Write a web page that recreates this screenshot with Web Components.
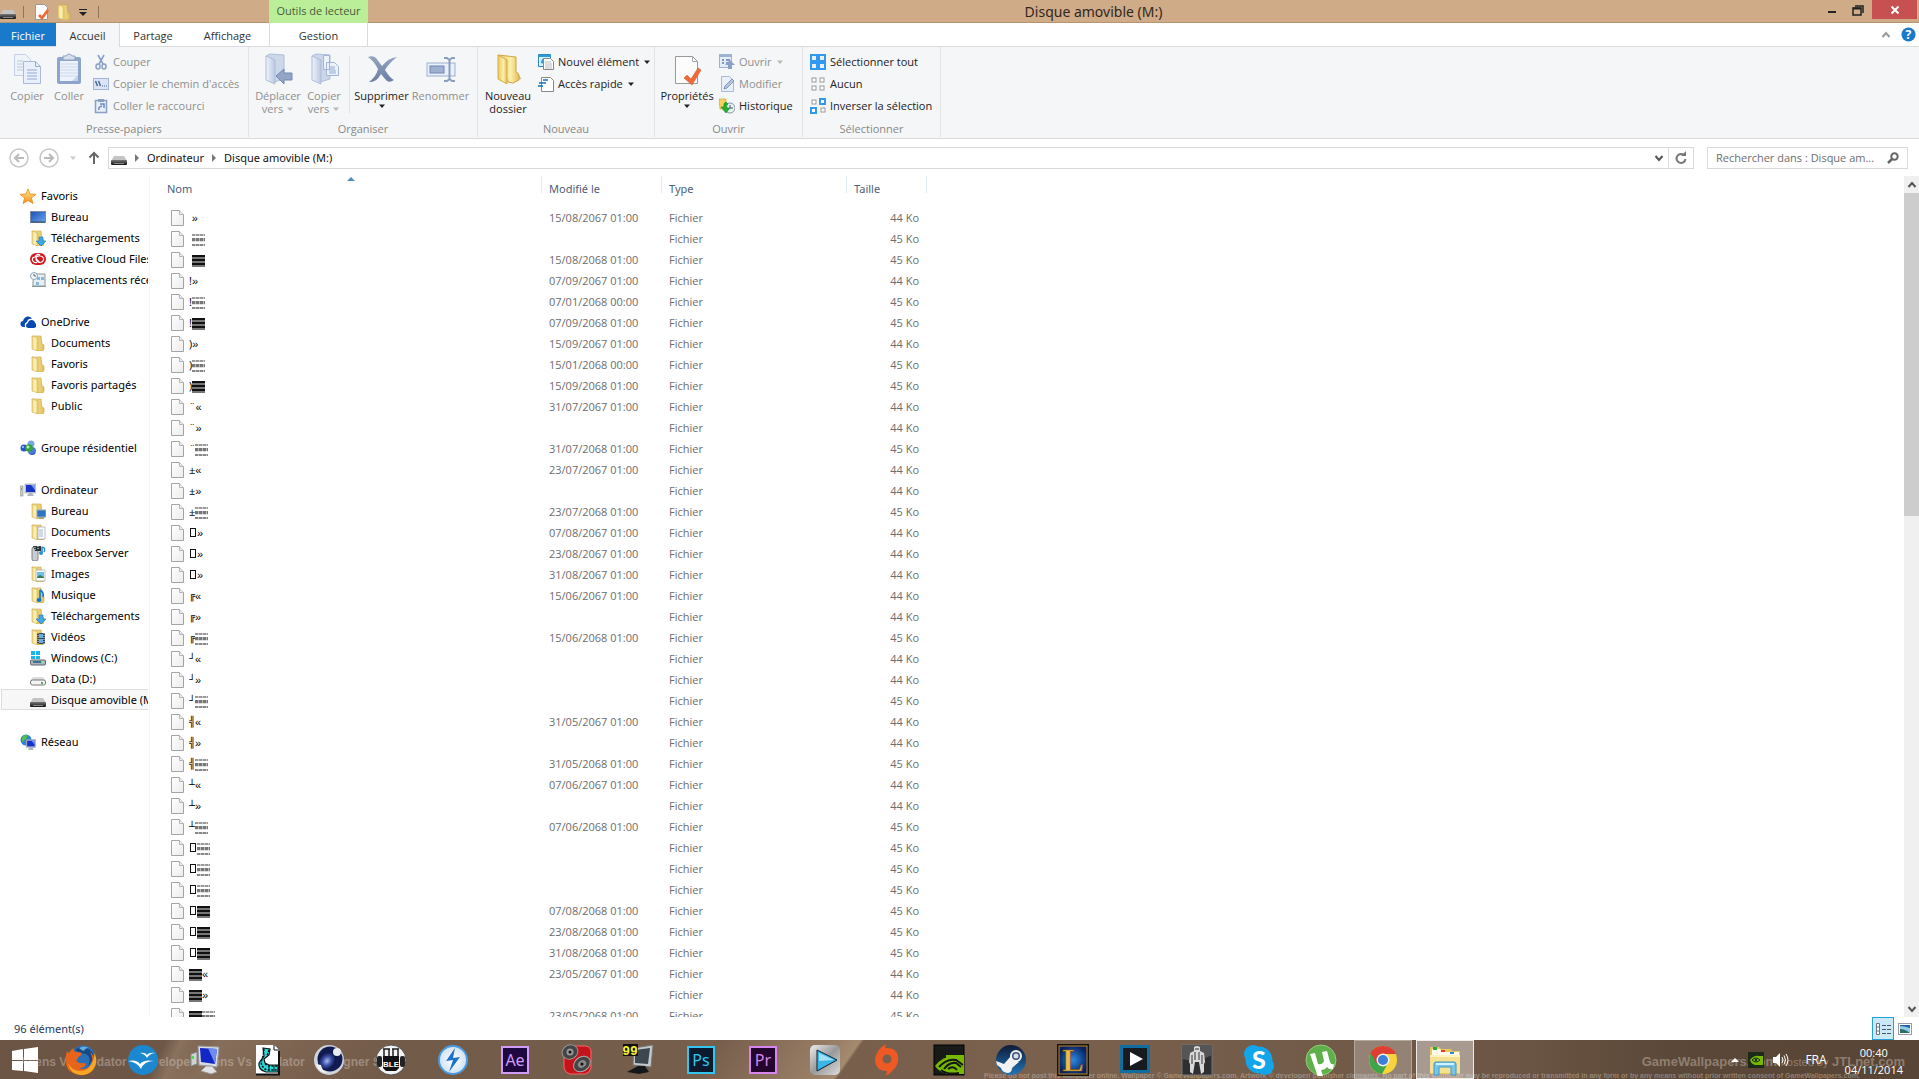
<!DOCTYPE html>
<html lang="fr">
<head>
<meta charset="utf-8">
<title>Disque amovible (M:)</title>
<style>
  html, body { height: 100%; margin: 0; overflow: hidden; }
  body {
    display: flex;
    flex-direction: column;
    background: #fff;
    color: #000;
    font: 11px/16px "Open Sans", "Noto Sans", sans-serif;
  }
</style>
</head>
<body>
<explorer-window></explorer-window>
<task-bar></task-bar>

<script>
const FOLDER = `
  <linearGradient id="f1" x2="1"><stop stop-color="#fbeeb0"/><stop offset="1" stop-color="#e2bf5a"/></linearGradient>
  <linearGradient id="f2" x2="1"><stop stop-color="#f0d67c"/><stop offset=".5" stop-color="#fdf3bb"/><stop offset="1" stop-color="#e9cb68"/></linearGradient>
  <path d="M2 1h9l1 8 2 1v4l-1 2H7z" fill="url(#f1)" stroke="#c9a648" stroke-width=".6"/>
  <path d="M2 1l6 2v13l-6-2z" fill="url(#f2)" stroke="#d0ad4e" stroke-width=".6"/>`;
const GREY_FOLDER = `
  <linearGradient id="g1" x2="1"><stop stop-color="#f0f4fb"/><stop offset="1" stop-color="#b9c8e2"/></linearGradient>
  <path d="M4 3l4-2 14 1v24l-10 3z" fill="#ccd7ea" stroke="#aebdd8"/>
  <path d="M4 3l9 4v24l-9-4z" fill="url(#g1)" stroke="#aebdd8"/>`;
const DRIVE_DARK = `
  <linearGradient id="d1" y2="1" x2="0"><stop stop-color="#777"/><stop offset="1" stop-color="#111"/></linearGradient>
  <path d="M3 6h10l3 5H0z" fill="#c4c4c4"/><rect y="10" width="16" height="5" rx="1" fill="url(#d1)"/><path d="M3 13.500h10" stroke="#888"/>`;
const ARROW_DOWN = '<path d="M9 7h4v4h3l-5 5-5-5h3z" fill="#3fa9e8" stroke="#1b78bd" stroke-width=".6"/>';
const MONITOR = '<rect x="5" y="2" width="11" height="9" fill="#c9cfda" stroke="#8c93a5" stroke-width=".6"/><rect x="6" y="3" width="9" height="7" fill="#1733c5"/><path d="M11 3h4v5z" fill="#7d9bf2"/><path d="M9 11h3l2 3H7z" fill="#aeb4c0"/>';
const GLOBE = '<circle cx="6" cy="6" r="5.500" fill="#2e83d6"/><path d="M2 3q3-3 6-2l-2 4-4 3zM6 8l5-1-3 4z" fill="#4fc04b"/>';
const square = (x, y, on) => on
  ? `<rect x="${x}" y="${y}" width="7" height="7" fill="#3399ee"/><rect x="${x + 2}" y="${y + 2}" width="3" height="3" fill="#fff"/>`
  : `<rect x="${x + 2}" y="${y + 2}" width="4" height="4" fill="#fff" stroke="#999"/>`;
const adobe = (text, fg, bg) => `<rect x="3" y="3" width="26" height="26" fill="${bg}" stroke="${fg}" stroke-width="2"/>
  <text x="16" y="22" text-anchor="middle" font-family="Noto Sans, sans-serif" font-size="16" fill="${fg}">${text}</text>`;

// name: [viewBox, markup]
const ICONS = {
  drive: ['0 0 16 16', DRIVE_DARK],
  hdd: ['0 0 16 16', '<path d="M3 6h10l3 4H0z" fill="#ddd"/><rect x=".5" y="9" width="15" height="5" rx="2" fill="#f5f5f5" stroke="#777"/><rect x="11" y="11" width="2" height="2" fill="#5a5"/>'],
  windrive: ['0 0 16 16', '<path d="M1 1h4v4H1zM6 1h4v4H6zM1 6h4v3H1zM6 6h4v3H6z" fill="#19b5ee"/><rect x=".5" y="10" width="15" height="5" rx="1" fill="#a9b6c2" stroke="#667"/><rect x="3" y="11" width="8" height="2" fill="#38758f"/><rect x="12" y="11" width="2" height="2" fill="#8e8"/>'],
  folder: ['0 0 16 16', FOLDER],
  folderDown: ['0 0 16 16', FOLDER + ARROW_DOWN],
  folderDesk: ['0 0 16 16', FOLDER + '<rect x="7" y="7" width="9" height="7" fill="#2f73c9" stroke="#9ab"/><path d="M9 15h5" stroke="#789"/>'],
  folderDoc: ['0 0 16 16', FOLDER + '<path d="M8 3h7v12H8z" fill="#fff" stroke="#9aa7b5" stroke-width=".7"/><path d="M9 6h4M9 8h4M9 10h4M9 12h4" stroke="#7aa6cf" stroke-width=".8"/>'],
  folderPic: ['0 0 16 16', FOLDER + '<path d="M6 4h9v11H6z" fill="#fff" stroke="#9aa7b5" stroke-width=".7"/><path d="M7 6h7v5H7z" fill="#6ec0e8"/><path d="M7 11l3-2 4 2v1H7z" fill="#3a7d53"/>'],
  folderMusic: ['0 0 16 16', FOLDER + '<path d="M10 3v9M10 3q4 2 3 7" stroke="#1976c4" stroke-width="1.600" fill="none"/><ellipse cx="9" cy="13" rx="2.500" ry="2" fill="#1976c4"/>'],
  folderVideo: ['0 0 16 16', FOLDER + '<rect x="7" y="4" width="8" height="11" fill="#3b4650"/><path d="M9 5h4v4H9zM9 10h4v4H9z" fill="#69aee0"/><path d="M8 4v11M14 4v11" stroke="#ddd" stroke-dasharray="1 1"/>'],
  star: ['0 0 16 16', '<linearGradient id="s" x2="0" y2="1"><stop stop-color="#fff0a0"/><stop offset="1" stop-color="#f58a12"/></linearGradient><path d="M8 1l2 5 6 .3-4.600 3.700L13 15.500 8 12.500 3 15.500 4.600 10 0 6.300 6 6z" fill="url(#s)" stroke="#e8871a" stroke-width=".8"/>'],
  desktop: ['0 0 16 16', '<linearGradient id="k" x2="1" y2="1"><stop stop-color="#1b4fb4"/><stop offset="1" stop-color="#6aa7ee"/></linearGradient><rect x=".5" y="2.500" width="15" height="11" fill="url(#k)" stroke="#7b8aa5"/><path d="M1 13h14" stroke="#345"/>'],
  cloud: ['0 0 16 16', '<rect y="2" width="16" height="12" rx="6" fill="#cf1a22"/><path d="M7 11.500q-4 .5-4.500-2.500T5 6q2-4 5-2M9 11.500q-3-1-3-4t4-2.500q4 .5 3.500 3.500T9.500 11.500q-1-1-3.500-4" fill="none" stroke="#fff" stroke-width="1.200"/>'],
  recent: ['0 0 16 16', '<path d="M5 2h10v12H3V9z" fill="#e8eef3" stroke="#8796a3"/><path d="M7 5h3v3H7zM11 5h3v3h-3zM6 10h3v3H6z" fill="#87b9dc"/><circle cx="4" cy="4" r="3.500" fill="#f4f8fb" stroke="#8fa3b3"/><path d="M4 2v2h2" stroke="#567" fill="none"/><path d="M2 14h14v1H2z" fill="#899"/>'],
  onedrive: ['0 0 16 16', '<path d="M5 13H3q-3-1-2.500-4Q1 7 3 7q1-4 4.500-4.500Q11 2 12 5q-4-1-5 3-3 1-2 5z" fill="#094ab2"/><path d="M8 14q-2-.5-2-2.500T8 9q.5-3 3.500-3T15 9q1.500.5 1.500 2.500T14 14z" fill="#094ab2"/>'],
  homegroup: ['0 0 16 16', '<circle cx="4" cy="8" r="3.500" fill="#2b57c5"/><circle cx="11" cy="4" r="3.500" fill="#7aa6e4"/><circle cx="12" cy="11" r="4" fill="#4a7cd4"/><circle cx="9" cy="8" r="3.800" fill="#35a33b"/><circle cx="8" cy="7" r="1.500" fill="#baf0a8"/><circle cx="3" cy="7" r="1" fill="#b5d2fa"/><path d="M11 14q2 1 4-1" stroke="#2b57c5" fill="none"/>'],
  computer: ['0 0 16 16', MONITOR + '<rect x="0" y="4" width="3" height="10" fill="#c8ccc9" stroke="#8a908c" stroke-width=".6"/><rect x="1" y="6" width="1" height="2" fill="#4c4"/>'],
  network: ['0 0 16 16', GLOBE + '<g transform="translate(2 4) scale(.85)">' + MONITOR + '</g>'],
  freebox: ['0 0 16 16', '<rect x="2" y="2" width="6" height="14" rx="2" fill="#c9cdcf" stroke="#7d8488"/><path d="M3 1h8v5H5z" fill="#2b3437"/><path d="M5 2v3M8 1v4" stroke="#dfe" stroke-dasharray="1 1"/><path d="M12 2v6M12 2q4 1 2 5" stroke="#2b8fd4" stroke-width="1.500" fill="none"/><circle cx="11" cy="8" r="2" fill="#2b8fd4"/>'],
  file: ['0 0 13 16', '<linearGradient id="p" x2="1" y2="1"><stop stop-color="#fff"/><stop offset="1" stop-color="#ececec"/></linearGradient><path d="M.5.5h8l4 4v11H.5z" fill="url(#p)" stroke="#a4a4a4"/><path d="M8.500.5v4h4" fill="#eee" stroke="#b4b4b4"/>'],
  check: ['0 0 16 16', '<path d="M1.500.5h9l3 3v12h-12z" fill="#fff" stroke="#999"/><path d="M5 11l3 3 6-8" fill="none" stroke="#ee6a38" stroke-width="2.800"/>'],
  caret: ['0 0 8 8', '<path d="M1 2.500h6L4 6z" fill="currentColor"/>'],
  quick: ['0 0 10 10', '<path d="M1 2.500h8" stroke="#222"/><path d="M1 5h8L5 9z" fill="#222"/>'],
  copy: ['0 0 32 32', '<path d="M3.500 1.500h11l5 5v16h-16z" fill="#eff4fb" stroke="#c2cfe3"/><path d="M6 8h6M6 11h6M6 14h6M6 17h6" stroke="#b7c7e0"/><path d="M12.500 8.500h12l5 5v17h-17z" fill="#e9f0fb" stroke="#a9bad8"/><path d="M24.500 8.500v5h5M16 17h10M16 20h10M16 23h10M16 26h10" fill="none" stroke="#94a9cf"/>'],
  paste: ['0 0 32 32', '<rect x="4" y="4" width="24" height="27" rx="2" fill="#8fa4ca"/><path d="M7 8h18v20H7z" fill="#edf2fb"/><path d="M7 11h18M7 14h18M7 17h18M7 20h18M7 23h18" stroke="#ccd7ea"/><path d="M10 3h3q1-2 3-2t3 2h3v4H10z" fill="#d7dfee" stroke="#8c9fc2"/><path d="M19 28l6-6v6z" fill="#c5d1e7"/>'],
  cut: ['0 0 16 16', '<path d="M5 1l5 9M11 1L6 10" stroke="#8ba0c6" stroke-width="1.600"/><ellipse cx="5" cy="12.500" rx="2" ry="2.500" fill="none" stroke="#8ba0c6" stroke-width="1.500"/><ellipse cx="11" cy="12.500" rx="2" ry="2.500" fill="none" stroke="#8ba0c6" stroke-width="1.500"/>'],
  path: ['0 0 16 16', '<rect x=".5" y="2.500" width="15" height="11" fill="#dbe5f5" stroke="#a3b5d5"/><path d="M2.500 5l2 5M5.500 5l2 5" stroke="#4c68a1" stroke-width="1.500"/><path d="M9 10h5" stroke="#4c68a1" stroke-dasharray="1 1"/>'],
  shortcut: ['0 0 16 16', '<rect x="2.500" y="2.500" width="11" height="12" fill="#e8eefa" stroke="#8b9fc6" stroke-width="1.500"/><rect x="5" y="1" width="6" height="3" fill="#8b9fc6"/><path d="M6 12q-1-3 3-4M7 6h4v4" fill="none" stroke="#6f8ac0" stroke-width="1.500"/>'],
  move: ['0 0 32 32', GREY_FOLDER + '<path d="M14 23l8-7v4h8v7h-8v4z" fill="#93a5c6" stroke="#7488b0"/>'],
  copyTo: ['0 0 32 32', GREY_FOLDER + '<path d="M15.500 2.500h6v14h-6zM18.500 9.500h8l4 4v9h-12z" fill="#edf2fb" stroke="#a2b4d4"/><path d="M21 14h6M21 16h6M21 18h7M21 20h7" stroke="#94a9cf"/>'],
  delete: ['0 0 32 32', '<linearGradient id="x" x2="0" y2="1"><stop stop-color="#94a4bf"/><stop offset="1" stop-color="#6c7fa3"/></linearGradient><path d="M2 4q5-2 8 1l6 8Q22 5 31 4q-8 6-12 13 5 8 9 10-4 3-7 1-3-3-6-7-5 9-12 8 7-5 9-13Q8 8 2 4z" fill="url(#x)"/>'],
  rename: ['0 0 32 32', '<rect x="2" y="10" width="28" height="13" fill="#e9f0fa" stroke="#9db0cf"/><rect x="5" y="13" width="14" height="7" fill="#9fb1d1" stroke="#6e86b3"/><path d="M19 5h3l2.500 2L27 5h3M24.500 6v21M19 28h3l2.500-2 2.500 2h3" fill="none" stroke="#8b9dbd" stroke-width="2"/>'],
  newFolder: ['0 0 32 32', `<linearGradient id="n" x2="1"><stop stop-color="#e9c95d"/><stop offset=".6" stop-color="#fbefac"/><stop offset="1" stop-color="#e3bd55"/></linearGradient>
    <path d="M20 28l10-2-4-5z" fill="#ccc"/><path d="M6 2l18 2v15q4 1 3 8l-6 3-5-1z" fill="url(#n)" stroke="#cfa544"/><path d="M6 2l9 5v24l-9-5z" fill="url(#n)" stroke="#d5ad4a"/>`],
  newItem: ['0 0 16 16', '<path d="M.5.5h12v12H.5z" fill="#d9effb" stroke="#2b8ac4"/><path d="M1 2h12" stroke="#2b9bd8" stroke-width="2"/><path d="M3 9q0-4 3-5v6z" fill="#3c9cd3"/><path d="M5.500 4.500h7l3 3v8h-10z" fill="#fff" stroke="#888"/><path d="M7 8h6M7 10h7M7 12h7M7 14h7" stroke="#aaa" stroke-width=".8"/>'],
  easy: ['0 0 16 16', '<path d="M3.500 1.500h9l3 3v11h-12z" fill="#fff" stroke="#888"/><path d="M5 4h5M1 7h7M0 10h5" stroke="#186fc0" stroke-width="1.500"/>'],
  props: ['0 0 32 32', '<path d="M4.500 3.500h17l5 5v22h-22z" fill="#fcfcfc" stroke="#999"/><path d="M21.500 3.500v5h5" fill="none" stroke="#aaa"/><path d="M13 25l3-3 4 4 7-11 3 2-9 15z" fill="#ef6a3a" stroke="#d9602f" stroke-width=".6"/>'],
  open: ['0 0 16 16', '<rect x=".5" y=".5" width="12" height="13" fill="#e4ecf8" stroke="#9eb1d1"/><path d="M1 2h12" stroke="#9eb1d1" stroke-width="2"/><path d="M3 6h2M7 6h4M3 9h2M7 9h4" stroke="#7e96c1" stroke-width="2"/><path d="M11 6l5 5h-3v4H9v-4H6z" fill="#8ba0c6"/>'],
  edit: ['0 0 16 16', '<path d="M2.500.5h8l4 4v11h-12z" fill="#eaf0fa" stroke="#a9bad8"/><path d="M5 13l1-3 7-7 2 2-7 7z" fill="#b8c7e1" stroke="#8096bf"/>'],
  history: ['0 0 16 16', '<path d="M0 1h7v10H1z" fill="#f5d35c" stroke="#d0a636" stroke-width=".7"/><circle cx="11" cy="10" r="5" fill="#e7f1f6" stroke="#8599a5"/><path d="M11 7v3h3" stroke="#456" fill="none"/><path d="M7 4q-3 1-2 5H2l5 6 4-5H8q-1-3 1-4z" fill="#25b02f" stroke="#138020" stroke-width=".6"/>'],
  selAll: ['0 0 16 16', '<path d="M0 0h16v16H0z" fill="#3399ee"/><path d="M2 2h4v4H2zM10 2h4v4h-4zM2 10h4v4H2zM10 10h4v4h-4z" fill="#e6f3ff"/>'],
  selNone: ['0 0 16 16', square(0, 0) + square(8, 0) + square(0, 8) + square(8, 8)],
  selInv: ['0 0 16 16', square(0, 0) + square(9, 0, true) + square(0, 9, true) + square(9, 8)],
  back: ['0 0 20 20', '<circle cx="10" cy="10" r="9" fill="#fff" stroke="#c8c8c8" stroke-width="1.500"/><path d="M15 10H6M10 6l-4 4 4 4" fill="none" stroke="#bbb" stroke-width="2"/>'],
  forward: ['0 0 20 20', '<circle cx="10" cy="10" r="9" fill="#fff" stroke="#c8c8c8" stroke-width="1.500"/><path d="M5 10h9M10 6l4 4-4 4" fill="none" stroke="#bbb" stroke-width="2"/>'],
  up: ['0 0 12 14', '<path d="M6 13V2M1.500 6.500L6 2l4.500 4.500" fill="none" stroke="#666" stroke-width="2"/>'],
  crumb: ['0 0 8 8', '<path d="M2 0l4 4-4 4z" fill="#777"/>'],
  chevDown: ['0 0 10 10', '<path d="M1.500 3L5 7l3.500-4" fill="none" stroke="#555" stroke-width="2"/>'],
  chevUp: ['0 0 10 10', '<path d="M1.500 7L5 3l3.500 4" fill="none" stroke="currentColor" stroke-width="2"/>'],
  refresh: ['0 0 14 14', '<path d="M10.500 4.500a4.500 4.500 0 1 0 1 3.500" fill="none" stroke="#777" stroke-width="2"/><path d="M7 5h5V0z" fill="#777"/>'],
  search: ['0 0 12 12', '<circle cx="7.500" cy="4.500" r="3.200" fill="none" stroke="#666" stroke-width="2"/><path d="M5 7l-4 4" stroke="#666" stroke-width="2.500"/>'],
  help: ['0 0 16 16', '<circle cx="8" cy="8" r="7.500" fill="#1979ca"/><text x="8" y="13" text-anchor="middle" font-family="Open Sans, sans-serif" font-weight="700" font-size="13" fill="#fff">?</text>'],
  min: ['0 0 12 12', '<path d="M2 8h8" stroke="#222" stroke-width="2"/>'],
  restore: ['0 0 12 12', '<path d="M1 4h8v7H1zM3 2h8v7" fill="none" stroke="#222" stroke-width="1.500"/><path d="M1 4.500h8" stroke="#222" stroke-width="2"/>'],
  close: ['0 0 10 10', '<path d="M1.500 1.500l7 7M8.500 1.500l-7 7" stroke="#fff" stroke-width="2"/>'],
  sort: ['0 0 8 5', '<path d="M0 5l4-4 4 4z" fill="#4d8fb8"/>'],
  details: ['0 0 16 16', '<path d="M1.500 2.500h3v11h-3z" fill="#fff" stroke="#678"/><path d="M2 6h3M2 10h3" stroke="#678"/><path d="M7 4.500h9M7 8.500h9M7 12.500h9" stroke="#456" stroke-dasharray="4 1"/>'],
  thumbs: ['0 0 14 12', '<rect x=".5" y=".5" width="13" height="11" fill="#fff" stroke="#99a"/><path d="M2 2h10v8H2z" fill="#8fcbe8"/><path d="M2 6q5 0 10 4H2z" fill="#2d6e63"/><path d="M2 3q4 0 10 2V2H2z" fill="#1f5ea8"/>'],

  start: ['0 0 28 28', '<path d="M1 5l11-2v11H1zM13 3l14-2v13H13zM1 15h11v10L1 24zM13 15h14v12l-14-2z" fill="#fff"/>'],
  firefox: ['0 0 32 32', '<circle cx="18" cy="14" r="12.500" fill="#2b6fb5"/><path d="M10 6q5-5 12-2 7 4 7 10l-6 8q4-9-2-12-7-1-11-4z" fill="#164a86"/><path d="M14 4q5-3 10 0-4 0-5 3-3-1-5-3z" fill="#67aede"/><path d="M2 7q1 2 2 2 2-4 5-5-1 3 2 4 4 0 6 1-1 3-4 4 0 3-2 3 2 4 7 3 2 0 3 1-1 4-7 4 8 3 12-4 3-5-1-12 4 3 5 9 1 7-4 11-5 4-11 3Q1 29 1 18q-1-6 1-11z" fill="#e9641b"/><path d="M3 19q4 8 12 8 9 0 13-10 2-4 1-8 3 4 2 10-3 12-15 12Q5 30 3 19z" fill="#f7a823"/>'],
  openoffice: ['0 0 32 32', '<circle cx="16" cy="16" r="15" fill="#1b87cf"/><path d="M13 9q5-1 7 2 2-3 9-2-6 0-9 5-2-4-7-5zM1 17q9-2 12 3 4-5 14-3-10 0-13 8-4-7-13-8z" fill="#fff"/>'],
  pc: ['0 0 32 32', '<path d="M2 10l6-2v12l-6 2z" fill="#cdd3cd" stroke="#888"/><path d="M3 12h2v3H3z" fill="#4d5"/><path d="M9 2l21 1-2 20-18-2z" fill="#d8dbe2" stroke="#999"/><path d="M11 4l17 1-2 15-14-2z" fill="#1227c6"/><path d="M19 4l9 1-2 15z" fill="#708bf0"/><path d="M17 22h6l5 6-6 2-10-3z" fill="#e1e1e4" stroke="#999"/>'],
  film: ['0 0 32 32', '<path d="M5 1h18l5 5v24H5z" fill="#fff"/><path d="M5 30.500h23V7" fill="none" stroke="#111" stroke-width="2"/><path d="M23 1v5h5" fill="#fff" stroke="#111"/><path d="M12 4l7 1-1 6-5 4 1 4 4 2h9v7H15q-8-2-7-9l5-7z" fill="#2bd8dc" stroke="#111" stroke-width="1.200"/><path d="M13 5l-1 7-2 6q1 6 6 8h11M18 6l-2 6M14 20l4 2h9" fill="none" stroke="#111" stroke-dasharray="2 1.500" stroke-width="1.500"/><path d="M18 22v5M23 22v5" stroke="#111"/>'],
  c4d: ['0 0 32 32', '<radialGradient id="c"><stop stop-color="#aab9ec"/><stop offset=".5" stop-color="#3a4fa5"/><stop offset="1" stop-color="#0b1241"/></radialGradient><circle cx="16" cy="16" r="15" fill="#cfd3da"/><circle cx="17" cy="15" r="12.500" fill="#121b50"/><ellipse cx="14" cy="17" rx="8" ry="10" transform="rotate(40 14 17)" fill="url(#c)"/><circle cx="24" cy="8" r="4" fill="#e8ebf1"/><path d="M3 20q2 9 12 9-6-2-7-8z" fill="#f2f2f2"/>'],
  able: ['0 0 32 32', '<circle cx="16" cy="16" r="15" fill="#f3f3f3" stroke="#555"/><path d="M9 14V5M14 14V5M18 14V5M23 14V5" stroke="#222" stroke-width="1.500"/><path d="M8 5h7M17 5h7" stroke="#222" stroke-width="1.500"/><path d="M8 12h16v12l-3 3H11l-3-3z" fill="#111"/><rect x="2" y="12" width="5" height="11" rx="2" fill="#222"/><rect x="25" y="12" width="5" height="11" rx="2" fill="#222"/><text x="16" y="23" text-anchor="middle" font-family="Liberation Sans, sans-serif" font-weight="700" font-size="8" fill="#fff">BLE</text>'],
  daemon: ['0 0 32 32', '<radialGradient id="m"><stop stop-color="#fff"/><stop offset="1" stop-color="#cfe2f3"/></radialGradient><circle cx="16" cy="16" r="14" fill="url(#m)" stroke="#4b9bdc" stroke-width="2"/><path d="M18 4l-9 13 7-1-4 12 11-15-7 1z" fill="#1d73cc"/>'],
  ae: ['0 0 32 32', adobe('Ae', '#cf9df5', '#1f0740')],
  speakers: ['0 0 32 32', '<path d="M8 2h17q5 1 5 6v16q-1 5-6 6H9q-5-1-6-6V8q1-5 5-6z" fill="#c5131b" stroke="#f26a6a"/><ellipse cx="9" cy="8" rx="8" ry="7" fill="#444" stroke="#999" transform="rotate(-25 9 8)"/><circle cx="9" cy="8" r="3.500" fill="#999"/><circle cx="9" cy="8" r="1.500" fill="#111"/><ellipse cx="21" cy="20" rx="9" ry="7" fill="#444" stroke="#aaa" transform="rotate(-35 21 20)"/><ellipse cx="21" cy="20" rx="4.500" ry="3.500" fill="#888" transform="rotate(-35 21 20)"/><circle cx="21" cy="20" r="1.500" fill="#111"/>'],
  fraps: ['0 0 32 32', '<path d="M11 4l19-3-2 22-18-2z" fill="#c3c7ca" stroke="#777"/><path d="M12 6l15-2-2 16-13-1z" fill="#3c4750"/><path d="M15 22h7l4 6-10 2-12-2z" fill="#15181b"/><rect width="15" height="12" fill="#111"/><text x="7" y="11" text-anchor="middle" font-family="Liberation Mono, monospace" font-weight="700" font-size="13" fill="#f6f232">99</text>'],
  ps: ['0 0 32 32', adobe('Ps', '#31c5f0', '#0b1a2c')],
  pr: ['0 0 32 32', adobe('Pr', '#d685ee', '#23052d')],
  player: ['0 0 32 32', '<linearGradient id="y" x2="1" y2="1"><stop stop-color="#eee"/><stop offset=".5" stop-color="#999"/><stop offset="1" stop-color="#ddd"/></linearGradient><rect x="1" y="1" width="30" height="30" rx="5" fill="url(#y)"/><path d="M8 6l20 10L8 27z" fill="#3ab6e6" stroke="#123"/><path d="M10 9l15 7-15 1z" fill="#9fe0f8"/>'],
  origin: ['0 0 32 32', '<path d="M15 0l-1 4q11-1 13 8 2 11-12 20l1-5Q5 27 4 17 4 6 15 0z" fill="#ef5a24"/><circle cx="16" cy="15" r="4.500" fill="#79604d"/>'],
  nvidia: ['0 0 32 32', '<rect x="1" y="1" width="30" height="30" fill="#181a18" stroke="#000"/><path d="M13 11h18v19H13z" fill="#76b900"/><path d="M2 22q8-11 22-10l7 5v13H15Q6 28 2 22z" fill="#76b900"/><path d="M6 23q8-9 17-7l7 5M11 25q5-7 12-6l5 4M15 25q5-4 9 1M8 26q6 5 18 3" fill="none" stroke="#141614" stroke-width="2"/>'],
  steam: ['0 0 32 32', '<linearGradient id="t" x2="0" y2="1"><stop stop-color="#101a38"/><stop offset="1" stop-color="#1f76b4"/></linearGradient><circle cx="16" cy="16" r="15" fill="url(#t)"/><path d="M1 17l8 3 7-8 8 6-7 6q0 5-5 5-5-1-6-5L2 21z" fill="#f1f1f1"/><circle cx="21" cy="12" r="6" fill="#f1f1f1"/><circle cx="21" cy="12" r="4" fill="#37517d"/><circle cx="21" cy="12" r="2.500" fill="#ddd"/>'],
  lol: ['0 0 32 32', '<radialGradient id="l"><stop stop-color="#2b8be2"/><stop offset="1" stop-color="#08205f"/></radialGradient><rect x="1" y="1" width="30" height="30" fill="url(#l)" stroke="#171105" stroke-width="2"/><rect x="2" y="2" width="28" height="28" fill="none" stroke="#b98b32"/><text x="16" y="27" text-anchor="middle" font-family="Liberation Serif, serif" font-weight="700" font-size="32" fill="#edbb47" stroke="#6b4208" stroke-width=".7">L</text>'],
  mpc: ['0 0 32 32', '<rect x="1" y="1" width="30" height="28" fill="#0f6d9f"/><rect x="4" y="4" width="24" height="22" fill="#171a1e"/><path d="M11 8l13 7-13 7z" fill="#fff"/>'],
  robot: ['0 0 32 32', '<rect x="1" y="1" width="30" height="30" fill="#2e2f31" stroke="#777"/><path d="M1 1h30v10q-15 8-30 4z" fill="#555"/><path d="M13 3q3-2 6 0v4l4 2 1 9-1 2v8l-3 2-2-12h-4l-2 12-3-2v-8l-1-2 1-9 4-2z" fill="#d8d8d8"/><path d="M14 8v8M18 8v8M11 11v9M21 11v9M14 5h4" stroke="#333"/>'],
  skype: ['0 0 32 32', '<circle cx="10" cy="10" r="9" fill="#12a5ea"/><circle cx="22" cy="22" r="9" fill="#12a5ea"/><circle cx="16" cy="16" r="13.500" fill="#12a5ea"/><text x="16" y="25" text-anchor="middle" font-family="Lato, sans-serif" font-weight="900" font-size="25" fill="#fff">S</text>'],
  utorrent: ['0 0 32 32', '<circle cx="16" cy="16" r="15" fill="#5fb04a" stroke="#92cc7c"/><path d="M5 10l5-1 3 11q4 1 6-3l-2-9 5-1 3 11q1 3 4 2l-1 5q-4 1-6-2-2 3-6 3l2 6-5 1z" fill="#fff"/>'],
  chrome: ['0 0 32 32', '<circle cx="16" cy="16" r="14" fill="#f9d33b"/><path d="M16 2a14 14 0 0 1 13 8H16l-7 10-6-10A14 14 0 0 1 16 2z" fill="#df3e33"/><path d="M4 9A14 14 0 0 0 15 30l6-11-12 0z" fill="#3da64b"/><circle cx="16" cy="16" r="6.500" fill="#f2f2f2"/><circle cx="16" cy="16" r="5" fill="#3f7fdc"/>'],
  explorer: ['0 0 32 32', '<path d="M1 3h9l2 2h10l1 2h8v23H1z" fill="#e8c75a"/><path d="M3 5h8l2 3h17v5H3z" fill="#fffbe8"/><path d="M4 3h4v3H4z" fill="#2ca84b"/><path d="M12 6h4v2h-4z" fill="#d83c2c"/><path d="M21 8h4v2h-4z" fill="#2a8ad0"/><path d="M1 11h30v18H1z" fill="#f6e193"/><path d="M1 11h30v2H1z" fill="#fdf3c1"/><path d="M5 31V20q0-2 2-2h18q2 0 2 2v11h-5v-8H10v8z" fill="#75c5ec" stroke="#4197c6"/><path d="M7 20h18" stroke="#d3f1ff" stroke-width="2"/>'],
  trayUp: ['0 0 8 8', '<path d="M0 6l4-4 4 4z" fill="#fff"/>'],
  trayNv: ['0 0 16 16', '<rect width="16" height="16" fill="#1c2a1a"/><path d="M2 8q4-5 9-4h4v9H7Q3 12 2 8z" fill="#76b900"/><path d="M4 8q4-4 8 0-4 4-8 0z" fill="none" stroke="#1b2b10"/><circle cx="8" cy="8" r="1.200" fill="#1b2b10"/>'],
  volume: ['0 0 16 16', '<path d="M0 5h3l4-4v14l-4-4H0z" fill="#fff"/><path d="M9 5q2 3 0 6M11 3.500q3 4.500 0 9M13 2q4 6 0 12" fill="none" stroke="#fff"/>']
};

class UiIcon extends HTMLElement {
  connectedCallback() {
    const [viewBox, markup] = ICONS[this.getAttribute('name')];
    const [, , w, h] = viewBox.split(' ');
    this.attachShadow({ mode: 'open' });
    this.shadowRoot.innerHTML = `
      <style>
        :host { display: inline-block; flex: none; line-height: 0; }
        svg { display: block; }
      </style>
      <svg width="${this.getAttribute('w') || w}" height="${this.getAttribute('h') || h}" viewBox="${viewBox}" aria-hidden="true">${markup}</svg>
    `;
  }
}
customElements.define('ui-icon', UiIcon);

class TitleBar extends HTMLElement {
  connectedCallback() {
    this.attachShadow({ mode: 'open' });
    this.shadowRoot.innerHTML = `
      <style>
        :host {
          display: flex;
          height: 23px;
          background: #cfab87;
          box-shadow: inset 0 -1px #b79470;
        }
        .quick {
          display: flex;
          align-items: center;
          width: 269px;
          box-sizing: border-box;
        }
        .quick button { padding: 0 3px; }
        .sep { width: 1px; height: 12px; margin: 0 7px; background: #8f7559; }
        .context {
          width: 99px;
          background: #bbee98;
          color: #4a5b3c;
          text-align: center;
          line-height: 21px;
        }
        h1 {
          flex: 1;
          margin: 0;
          font: 400 14px/23px "Noto Sans", "Open Sans", sans-serif;
          text-align: center;
          color: #30271e;
        }
        button {
          display: flex;
          align-items: center;
          justify-content: center;
          border: 0;
          padding: 0;
          background: none;
        }
        .win { width: 26px; height: 20px; }
        .close { width: 45px; height: 19px; margin: 0 2px 0 1px; background: #c75050; }
      </style>
      <div class="quick">
        <ui-icon name="drive"></ui-icon><span class="sep"></span>
        <button aria-label="Propriétés"><ui-icon name="check"></ui-icon></button>
        <button aria-label="Nouveau dossier"><ui-icon name="folder"></ui-icon></button>
        <button aria-label="Personnaliser"><ui-icon name="quick"></ui-icon></button>
        <span class="sep"></span>
      </div>
      <div class="context">Outils de lecteur</div>
      <h1>Disque amovible (M:)</h1>
      <button class="win" aria-label="Réduire"><ui-icon name="min"></ui-icon></button>
      <button class="win" aria-label="Restaurer"><ui-icon name="restore"></ui-icon></button>
      <button class="close" aria-label="Fermer"><ui-icon name="close"></ui-icon></button>
    `;
  }
}
customElements.define('title-bar', TitleBar);

class RibbonTabs extends HTMLElement {
  connectedCallback() {
    this.attachShadow({ mode: 'open' });
    this.shadowRoot.innerHTML = `
      <style>
        :host {
          display: flex;
          height: 23px;
          background: #fff;
          border-bottom: 1px solid #dadbdc;
        }
        button {
          box-sizing: border-box;
          height: 23px;
          border: 0;
          padding: 2px 0 0;
          background: none;
          font: inherit;
          color: #333;
        }
        .file { width: 56px; background: #1979ca; color: #fff; }
        .active {
          width: 64px;
          height: 24px;
          background: #f5f6f7;
          border-right: 1px solid #dadbdc;
        }
        .share { width: 66px; }
        .view { width: 83px; }
        .manage { width: 99px; border: solid #dadbdc; border-width: 0 1px; }
        .right {
          display: flex;
          align-items: center;
          gap: 10px;
          margin-left: auto;
          padding-right: 3px;
          color: #999;
        }
      </style>
      <button class="file">Fichier</button>
      <button class="active">Accueil</button>
      <button class="share">Partage</button>
      <button class="view">Affichage</button>
      <button class="manage">Gestion</button>
      <div class="right">
        <ui-icon name="chevUp"></ui-icon>
        <ui-icon name="help" w="15" h="15"></ui-icon>
      </div>
    `;
  }
}
customElements.define('ribbon-tabs', RibbonTabs);

class RibbonGroup extends HTMLElement {
  connectedCallback() {
    this.attachShadow({ mode: 'open' });
    this.shadowRoot.innerHTML = `
      <style>
        :host {
          display: flex;
          flex-direction: column;
          box-sizing: border-box;
          height: 90px;
          border-right: 1px solid #e2e3e4;
        }
        .items { display: flex; flex: 1; }
        .label { text-align: center; color: #888; line-height: 16px; }
      </style>
      <div class="items"><slot></slot></div>
      <div class="label">${this.getAttribute('label')}</div>
    `;
  }
}
customElements.define('ribbon-group', RibbonGroup);

class RibbonButton extends HTMLElement {
  connectedCallback() {
    const large = this.hasAttribute('large');
    const caret = this.hasAttribute('caret') ? '<ui-icon class="caret" name="caret"></ui-icon>' : '';
    const label = this.getAttribute('label').replace('|', '<br>');
    const off = this.hasAttribute('off');
    this.attachShadow({ mode: 'open' });
    this.shadowRoot.innerHTML = `
      <style>
        :host { display: block; color: ${off ? '#8f8f8f' : '#222'}; }
        button {
          display: flex;
          align-items: center;
          border: 0;
          padding: 0;
          background: none;
          color: inherit;
          font: inherit;
          white-space: nowrap;
          ${large ? 'width: 100%; flex-direction: column; line-height: 13px;' : 'gap: 4px; height: 22px;'}
        }
        ${large ? 'button > ui-icon:first-child { margin: 6px 0 4px; }' : ''}
        span { display: block; text-align: center; }
        ${off ? '.caret { opacity: .6; }' : ''}
        span .caret { margin-left: 3px; }
      </style>
      <button${off ? ' disabled' : ''}>
        <ui-icon name="${this.getAttribute('icon')}"></ui-icon>
        <span>${label}${label.includes('<br>') ? caret : ''}</span>
        ${label.includes('<br>') ? '' : caret}
      </button>
    `;
  }
}
customElements.define('ribbon-button', RibbonButton);

class RibbonBar extends HTMLElement {
  connectedCallback() {
    this.attachShadow({ mode: 'open' });
    this.shadowRoot.innerHTML = `
      <style>
        :host {
          display: flex;
          height: 91px;
          background: #f5f6f7;
          border-bottom: 1px solid #dadbdc;
        }
        .clip { width: 249px; }
        .org { width: 229px; }
        .new { width: 177px; }
        .open { width: 148px; }
        .sel { width: 138px; }
        .stack { padding-top: 4px; }
        .clip .stack { padding-left: 3px; }
        .clip ribbon-button[large] { width: 42px; }
        .clip ribbon-button[large]:first-child { margin-left: 6px; }
        .org ribbon-button[large] { width: 46px; }
        .org ribbon-button[large]:first-child { margin-left: 6px; }
        .org .rule { width: 1px; margin: 9px 2px 8px; background: #dfe0e1; }
        .org ribbon-button.wide { width: 59px; }
        .new ribbon-button[large] { width: 60px; }
        .open ribbon-button[large] { width: 64px; }
        .sel .stack { padding-left: 7px; }
      </style>
      <ribbon-group class="clip" label="Presse-papiers">
        <ribbon-button large off icon="copy" label="Copier"></ribbon-button>
        <ribbon-button large off icon="paste" label="Coller"></ribbon-button>
        <div class="stack">
          <ribbon-button off icon="cut" label="Couper"></ribbon-button>
          <ribbon-button off icon="path" label="Copier le chemin d'accès"></ribbon-button>
          <ribbon-button off icon="shortcut" label="Coller le raccourci"></ribbon-button>
        </div>
      </ribbon-group>
      <ribbon-group class="org" label="Organiser">
        <ribbon-button large off caret icon="move" label="Déplacer|vers"></ribbon-button>
        <ribbon-button large off caret icon="copyTo" label="Copier|vers"></ribbon-button>
        <span class="rule"></span>
        <ribbon-button class="wide" large caret icon="delete" label="Supprimer"></ribbon-button>
        <ribbon-button class="wide" large off icon="rename" label="Renommer"></ribbon-button>
      </ribbon-group>
      <ribbon-group class="new" label="Nouveau">
        <ribbon-button large icon="newFolder" label="Nouveau|dossier"></ribbon-button>
        <div class="stack">
          <ribbon-button caret icon="newItem" label="Nouvel élément"></ribbon-button>
          <ribbon-button caret icon="easy" label="Accès rapide"></ribbon-button>
        </div>
      </ribbon-group>
      <ribbon-group class="open" label="Ouvrir">
        <ribbon-button large caret icon="props" label="Propriétés"></ribbon-button>
        <div class="stack">
          <ribbon-button off caret icon="open" label="Ouvrir"></ribbon-button>
          <ribbon-button off icon="edit" label="Modifier"></ribbon-button>
          <ribbon-button icon="history" label="Historique"></ribbon-button>
        </div>
      </ribbon-group>
      <ribbon-group class="sel" label="Sélectionner">
        <div class="stack">
          <ribbon-button icon="selAll" label="Sélectionner tout"></ribbon-button>
          <ribbon-button icon="selNone" label="Aucun"></ribbon-button>
          <ribbon-button icon="selInv" label="Inverser la sélection"></ribbon-button>
        </div>
      </ribbon-group>
    `;
  }
}
customElements.define('ribbon-bar', RibbonBar);

class AddressBar extends HTMLElement {
  connectedCallback() {
    this.attachShadow({ mode: 'open' });
    this.shadowRoot.innerHTML = `
      <style>
        :host {
          display: flex;
          align-items: center;
          height: 37px;
          padding: 0 11px 0 9px;
        }
        button { display: flex; border: 0; padding: 0; background: none; }
        .nav { display: flex; align-items: center; gap: 10px; width: 99px; }
        .nav .drop { color: #ccc; }
        .box {
          display: flex;
          align-items: center;
          box-sizing: border-box;
          height: 22px;
          border: 1px solid #d9d9d9;
        }
        .path { flex: 1; gap: 6px; padding-left: 2px; }
        a { font-family: "Noto Sans", "Open Sans", sans-serif; color: #111; text-decoration: none; }
        .path .drop { margin-left: auto; }
        .refresh {
          align-items: center;
          justify-content: center;
          width: 25px;
          height: 20px;
          margin-left: -2px;
          border-left: 1px solid #d9d9d9;
        }
        .search { width: 201px; margin-left: 13px; padding: 0 8px; }
        input {
          flex: 1;
          min-width: 0;
          border: 0;
          padding: 0;
          outline: 0;
          background: none;
          font: inherit;
          text-overflow: ellipsis;
        }
        input::placeholder { color: #6d6d6d; opacity: 1; }
      </style>
      <div class="nav">
        <button aria-label="Précédent"><ui-icon name="back"></ui-icon></button>
        <button aria-label="Suivant"><ui-icon name="forward"></ui-icon></button>
        <button class="drop" aria-label="Emplacements récents"><ui-icon name="caret"></ui-icon></button>
        <button aria-label="Dossier parent"><ui-icon name="up" w="14" h="14"></ui-icon></button>
      </div>
      <div class="box path">
        <ui-icon name="drive"></ui-icon>
        <ui-icon name="crumb"></ui-icon>
        <a href="#ordinateur">Ordinateur</a>
        <ui-icon name="crumb"></ui-icon>
        <a href="#m">Disque amovible (M:)</a>
        <button class="drop" aria-label="Historique"><ui-icon name="chevDown"></ui-icon></button>
        <button class="refresh" aria-label="Actualiser"><ui-icon name="refresh"></ui-icon></button>
      </div>
      <div class="box search">
        <input type="text" aria-label="Rechercher" placeholder="Rechercher dans : Disque am...">
        <ui-icon name="search"></ui-icon>
      </div>
    `;
  }
}
customElements.define('address-bar', AddressBar);

const TREE = [
  ['Favoris', 'star', [
    ['Bureau', 'desktop'], ['Téléchargements', 'folderDown'],
    ['Creative Cloud Files', 'cloud'], ['Emplacements récents', 'recent']
  ]],
  ['OneDrive', 'onedrive', [
    ['Documents', 'folder'], ['Favoris', 'folder'], ['Favoris partagés', 'folder'], ['Public', 'folder']
  ]],
  ['Groupe résidentiel', 'homegroup', []],
  ['Ordinateur', 'computer', [
    ['Bureau', 'folderDesk'], ['Documents', 'folderDoc'], ['Freebox Server', 'freebox'],
    ['Images', 'folderPic'], ['Musique', 'folderMusic'], ['Téléchargements', 'folderDown'],
    ['Vidéos', 'folderVideo'], ['Windows (C:)', 'windrive'], ['Data (D:)', 'hdd'],
    ['Disque amovible (M:)', 'drive', true]
  ]],
  ['Réseau', 'network', []]
];

class NavTree extends HTMLElement {
  connectedCallback() {
    const row = ([label, icon, selected], cls) =>
      `<a href="#" class="${cls}${selected === true ? ' selected' : ''}"><ui-icon name="${icon}"></ui-icon>${label}</a>`;
    this.attachShadow({ mode: 'open' });
    this.shadowRoot.innerHTML = `
      <style>
        :host {
          display: block;
          width: 147px;
          margin-right: 1px;
          padding: 9px 0 0 1px;
          overflow: hidden;
          font-family: "Noto Sans", "Open Sans", sans-serif;
        }
        section { margin-bottom: 21px; }
        a {
          display: flex;
          align-items: center;
          gap: 5px;
          box-sizing: border-box;
          height: 21px;
          border: 1px solid transparent;
          border-right: 0;
          color: #000;
          text-decoration: none;
          white-space: nowrap;
          overflow: hidden;
        }
        .root { padding-left: 18px; }
        .child { padding-left: 28px; }
        .selected { background: #f7f7f7; border-color: #dedede; }
      </style>
      ${TREE.map(node => `<section>${row(node, 'root')}${node[2].map(c => row(c, 'child')).join('')}</section>`).join('')}
    `;
  }
}
customElements.define('nav-tree', NavTree);

// "L" and "D" stand for the light and dark shade blocks in a name, "U" for an unknown glyph
const FILES = [
  ['&nbsp;»', '15/08/2067 01:00', 44],
  ['&nbsp;L', '', 45],
  ['&nbsp;D', '15/08/2068 01:00', 45],
  ['!»', '07/09/2067 01:00', 44],
  ['!L', '07/01/2068 00:00', 45],
  ['!D', '07/09/2068 01:00', 45],
  [')»', '15/09/2067 01:00', 44],
  [')L', '15/01/2068 00:00', 45],
  [')D', '15/09/2068 01:00', 45],
  ['¨«', '31/07/2067 01:00', 44],
  ['¨»', '', 44],
  ['¨L', '31/07/2068 01:00', 45],
  ['±«', '23/07/2067 01:00', 44],
  ['±»', '', 44],
  ['±L', '23/07/2068 01:00', 45],
  ['U»', '07/08/2067 01:00', 44],
  ['U»', '23/08/2067 01:00', 44],
  ['U»', '31/08/2067 01:00', 44],
  ['╔«', '15/06/2067 01:00', 44],
  ['╔»', '', 44],
  ['╔L', '15/06/2068 01:00', 45],
  ['┘«', '', 44],
  ['┘»', '', 44],
  ['┘L', '', 45],
  ['╣«', '31/05/2067 01:00', 44],
  ['╣»', '', 44],
  ['╣L', '31/05/2068 01:00', 45],
  ['┴«', '07/06/2067 01:00', 44],
  ['┴»', '', 44],
  ['┴L', '07/06/2068 01:00', 45],
  ['UL', '', 45],
  ['UL', '', 45],
  ['UL', '', 45],
  ['UD', '07/08/2068 01:00', 45],
  ['UD', '23/08/2068 01:00', 45],
  ['UD', '31/08/2068 01:00', 45],
  ['D«', '23/05/2067 01:00', 44],
  ['D»', '', 44],
  ['DL', '23/05/2068 01:00', 45]
];

class FileList extends HTMLElement {
  connectedCallback() {
    const name = text => text
      .replace(/[╔┘╣┴]/, '<span class="box">$&</span>')
      .replace(/[«»]/, '<span class="quote">$&</span>')
      .replace('L', '<i class="light"></i>')
      .replace('D', '<i class="dark"></i>')
      .replace('U', '<i class="unknown"></i>');
    this.attachShadow({ mode: 'open' });
    this.shadowRoot.innerHTML = `
      <style>
        :host { display: block; flex: 1; overflow: hidden; padding-left: 10px; border-left: 1px solid #f5f5f5; }
        table { table-layout: fixed; width: 767px; border-collapse: collapse; }
        th {
          position: relative;
          height: 31px;
          box-sizing: border-box;
          padding: 0 8px 5px 7px;
          font: 400 11px/16px "Noto Sans", "Open Sans", sans-serif;
          text-align: left;
          color: #4c607a;
          background: linear-gradient(#dfeaf3, #dfeaf3) right top / 1px 17px no-repeat;
        }
        th ui-icon { position: absolute; top: 0; left: 50%; margin-left: -4px; }
        td {
          height: 21px;
          padding: 0 8px 0 7px;
          color: #6d6d6d;
          white-space: nowrap;
          line-height: 16px;
        }
        td:first-child { padding-left: 6px; }
        td:last-child { text-align: right; }
        .name { display: flex; align-items: center; gap: 5px; height: 21px; padding-left: 5px; color: #000; }
        .name div { display: flex; align-items: center; height: 21px; }
        .box { font: 10px/16px "DejaVu Sans Mono", monospace; }
        .quote { font: 11px/16px "Liberation Sans", sans-serif; }
        i { width: 13px; height: 12px; margin-top: 3px; }
        .light {
          background:
            repeating-linear-gradient(90deg, transparent 0 3px, rgba(255, 255, 255, .5) 3px 4px),
            linear-gradient(#999 2px, #fff 2px 4px, #777 4px 7px, #ddd 7px 8px, #fff 8px 10px, #888 10px);
        }
        .dark { background: repeating-linear-gradient(#111 0 2px, #777 2px 4px); }
        .unknown { box-sizing: border-box; width: 6px; height: 9px; margin: 0 1px; border: 1px solid #111; }
      </style>
      <table>
        <colgroup><col><col style="width:120px"><col style="width:185px"><col style="width:80px"></colgroup>
        <thead>
          <tr><th>Nom<ui-icon name="sort"></ui-icon></th><th>Modifié le</th><th>Type</th><th>Taille</th></tr>
        </thead>
        <tbody>
          ${FILES.map(([label, date, size]) => `
            <tr>
              <td><div class="name"><ui-icon name="file"></ui-icon><div>${name(label)}</div></div></td>
              <td>${date}</td>
              <td>Fichier</td>
              <td>${size} Ko</td>
            </tr>`).join('')}
        </tbody>
      </table>
    `;
  }
}
customElements.define('file-list', FileList);

class ScrollTrack extends HTMLElement {
  connectedCallback() {
    this.attachShadow({ mode: 'open' });
    this.shadowRoot.innerHTML = `
      <style>
        :host { display: flex; flex-direction: column; width: 15px; background: #f0f0f0; }
        button {
          display: flex;
          align-items: center;
          justify-content: center;
          height: 17px;
          border: 0;
          padding: 0;
          background: none;
          color: #555;
        }
        .track { flex: 1; }
        .thumb { height: 40%; background: #cdcdcd; }
      </style>
      <button aria-label="Monter"><ui-icon name="chevUp"></ui-icon></button>
      <div class="track"><div class="thumb"></div></div>
      <button aria-label="Descendre"><ui-icon name="chevDown"></ui-icon></button>
    `;
  }
}
customElements.define('scroll-track', ScrollTrack);

class StatusBar extends HTMLElement {
  connectedCallback() {
    this.attachShadow({ mode: 'open' });
    this.shadowRoot.innerHTML = `
      <style>
        :host {
          display: flex;
          align-items: center;
          height: 23px;
          padding: 0 7px 0 14px;
          color: #1e395b;
          font-family: "Noto Sans", "Open Sans", sans-serif;
        }
        button { display: flex; border: 0; padding: 0; background: none; }
        .details {
          box-sizing: border-box;
          align-items: center;
          justify-content: center;
          width: 22px;
          height: 23px;
          margin: 0 4px 0 auto;
          border: 1px solid #26a0da;
          background: #cbe8f6;
        }
      </style>
      <span>96 élément(s)</span>
      <button class="details" aria-label="Détails"><ui-icon name="details"></ui-icon></button>
      <button aria-label="Grandes icônes"><ui-icon name="thumbs"></ui-icon></button>
    `;
  }
}
customElements.define('status-bar', StatusBar);

class ExplorerWindow extends HTMLElement {
  connectedCallback() {
    this.attachShadow({ mode: 'open' });
    this.shadowRoot.innerHTML = `
      <style>
        :host { display: flex; flex-direction: column; flex: 1; min-height: 0; }
        main { display: flex; flex: 1; min-height: 0; }
      </style>
      <title-bar></title-bar>
      <ribbon-tabs></ribbon-tabs>
      <ribbon-bar></ribbon-bar>
      <address-bar></address-bar>
      <main>
        <nav-tree></nav-tree>
        <file-list></file-list>
        <scroll-track></scroll-track>
      </main>
      <status-bar></status-bar>
    `;
  }
}
customElements.define('explorer-window', ExplorerWindow);

const APPS = [
  ['firefox', 'Firefox'], ['openoffice', 'OpenOffice'], ['pc', 'Ordinateur'], ['film', 'Vidéo'],
  ['c4d', 'Cinema 4D'], ['able', 'Able'], ['daemon', 'Daemon Tools'], ['ae', 'After Effects'],
  ['speakers', 'Audio'], ['fraps', 'Fraps'], ['ps', 'Photoshop'], ['pr', 'Premiere Pro'],
  ['player', 'Lecteur'], ['origin', 'Origin'], ['nvidia', 'NVIDIA'], ['steam', 'Steam'],
  ['lol', 'League of Legends'], ['mpc', 'Films'], ['robot', 'Jeu'], ['skype', 'Skype'],
  ['utorrent', 'µTorrent'], ['chrome', 'Chrome', 'running'], ['explorer', 'Explorateur', 'current']
];

class TaskBar extends HTMLElement {
  connectedCallback() {
    this.attachShadow({ mode: 'open' });
    this.shadowRoot.innerHTML = `
      <style>
        :host {
          display: flex;
          position: relative;
          height: 39px;
          overflow: hidden;
          color: #fff;
          background:
            linear-gradient(115deg, transparent 150px, rgba(190, 165, 140, .35) 165px, transparent 190px),
            linear-gradient(125deg, transparent 155px, rgba(170, 145, 120, .4) 180px, rgba(150, 120, 98, .2) 280px, transparent 340px),
            linear-gradient(125deg, transparent 590px, rgba(190, 160, 130, .5) 690px, rgba(200, 175, 140, .55) 705px, transparent 708px),
            linear-gradient(90deg, #6b5444, #755d4b 30%, #7a614e 55%, #6d5645 78%, #5a4737 88%, #584535);
        }
        /* wallpaper credits showing through the bar */
        .credit {
          position: absolute;
          top: 15px;
          font: 700 12px/14px "Liberation Sans Narrow", "Liberation Sans", sans-serif;
          color: rgba(225, 215, 205, .4);
          white-space: nowrap;
        }
        .small { top: auto; left: 984px; right: 12px; bottom: -3px; font-size: 7px; line-height: 12px; overflow: hidden; }
        .site { right: 14px; font-size: 13px; }
        .site small { font-size: 11px; font-weight: 400; }
        button {
          display: flex;
          position: relative;
          align-items: center;
          justify-content: center;
          box-sizing: border-box;
          width: 58px;
          height: 39px;
          margin: 0 2px;
          border: 0;
          padding: 0;
          background: none;
          color: inherit;
          font: inherit;
        }
        .start { width: 50px; margin: 0; }
        .running { background: rgba(255, 255, 255, .25); border: 1px solid rgba(255, 255, 255, .3); }
        .current { background: rgba(255, 255, 255, .4); border: 1px solid rgba(255, 255, 255, .8); }
        .tray {
          display: flex;
          position: relative;
          align-items: center;
          gap: 9px;
          margin-left: auto;
          padding-right: 16px;
        }
        .lang { margin: 0 9px 0 7px; font-size: 12px; }
        time { line-height: 17px; text-align: center; padding-top: 2px; }
      </style>
      <span class="credit" style="left:20px">Aliens Vs Predator</span>
      <span class="credit" style="left:138px">developer</span>
      <span class="credit" style="left:198px">Aliens Vs Predator</span>
      <span class="credit" style="left:318px">Designer SK</span>
      <span class="credit site">GameWallpapers.com <small>hosted by</small> JTLnet.com</span>
      <span class="credit small">Please do not post this wallpaper online. Wallpaper © GameWallpapers.com. Artwork © developer/ publisher claimants. No part of this wallpaper may be reproduced or transmitted in any form or by any means without prior written consent of GameWallpapers.com.</span>
      <button class="start" aria-label="Démarrer"><ui-icon name="start"></ui-icon></button>
      ${APPS.map(([icon, label, state]) =>
        `<button class="${state || ''}" aria-label="${label}"><ui-icon name="${icon}"></ui-icon></button>`).join('')}
      <div class="tray">
        <ui-icon name="trayUp"></ui-icon>
        <ui-icon name="trayNv"></ui-icon>
        <ui-icon name="volume"></ui-icon>
        <span class="lang">FRA</span>
        <time>00:40<br>04/11/2014</time>
      </div>
    `;
  }
}
customElements.define('task-bar', TaskBar);
</script>
</body>
</html>
